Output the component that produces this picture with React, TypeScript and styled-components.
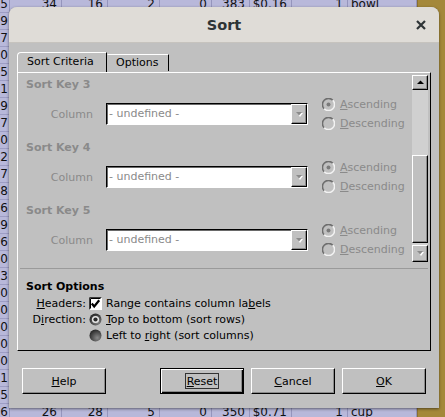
import React from 'react'
import styled, { createGlobalStyle } from 'styled-components'

const GlobalStyle = createGlobalStyle`
  html, body {
    margin: 0;
    padding: 0;
  }
  body {
    width: 445px;
    height: 417px;
    overflow: hidden;
    background: #a4883a;
    font-family: "DejaVu Sans", sans-serif;
  }
`

const Screen = styled.div`
  position: relative;
  display: flex;
  width: 445px;
  height: 417px;
  overflow: hidden;
`

const Sheet = styled.div`
  width: 417px;
  margin-top: -4px;
  background: #b8b8da;
`

const SheetRow = styled.div`
  display: grid;
  grid-template-columns: 10px 52px 46px 52px 52px 38px 42px 56px 69px;
  height: 17px;
`

const Cell = styled.div<{ $text?: boolean }>`
  box-sizing: border-box;
  display: flex;
  align-items: center;
  justify-content: ${(p) => (p.$text ? 'flex-start' : 'flex-end')};
  padding: ${(p) => (p.$text ? '0 0 0 3px' : '0 4px 0 0')};
  border-right: 1px solid #9595bd;
  border-bottom: 1px solid #9d9dc4;
  font-size: 12px;
  color: #111;
  white-space: nowrap;
  overflow: hidden;

  &:first-child {
    padding-right: 1px;
  }
`

const Desktop = styled.div`
  flex: 1;
  background: #a4883a;
  border-left: 1px solid #8a7030;
`

const Dialog = styled.div`
  position: absolute;
  left: 9px;
  top: 7px;
  width: 430px;
  height: 401px;
  display: flex;
  flex-direction: column;
  border-radius: 8px 8px 0 0;
  background: #c0c0c0;
  box-shadow: 0 1px 3px rgba(0, 0, 0, 0.5);
  overflow: hidden;
`

const TitleBar = styled.div`
  flex: none;
  height: 36px;
  box-sizing: border-box;
  display: grid;
  grid-template-columns: 1fr auto 1fr;
  align-items: center;
  background: #dfdcd7;
  border-bottom: 1px solid #c6c3be;
`

const Title = styled.div`
  grid-column: 2;
  font-size: 14.5px;
  font-weight: bold;
  color: #2e3436;
`

const CloseButton = styled.div`
  justify-self: end;
  display: flex;
  margin-right: 13px;
`

const Body = styled.div`
  flex: 1;
  display: flex;
  flex-direction: column;
  padding: 9px 8px 14px;
`

const TabStrip = styled.div`
  display: flex;
  align-items: flex-end;
  height: 20px;
`

const Tab = styled.div<{ $active?: boolean }>`
  box-sizing: border-box;
  height: ${(p) => (p.$active ? '20px' : '17px')};
  margin-bottom: ${(p) => (p.$active ? '0' : '1px')};
  padding: ${(p) => (p.$active ? '2px 0 0 9px' : '1px 0 0 8px')};
  width: ${(p) => (p.$active ? '90px' : '62px')};
  border-top: 1px solid #fff;
  border-left: 1px solid ${(p) => (p.$active ? '#fff' : '#c0c0c0')};
  border-right: 1px solid #000;
  border-radius: ${(p) => (p.$active ? '4px 0 0 0' : '0')};
  font-size: 11px;
  line-height: 14px;
  color: #000;
  position: relative;
  z-index: 1;
`

const Panel = styled.div`
  box-sizing: border-box;
  height: 279px;
  display: flex;
  flex-direction: column;
  border-style: solid;
  border-width: 1px;
  border-color: #fff #000 #000 #fff;
`

const ScrollArea = styled.div`
  display: flex;
  height: 194px;
  padding: 2px 1px 0 0;
  box-sizing: border-box;
`

const KeyList = styled.div`
  flex: 1;
  padding: 2px 0 0 8px;
  overflow: hidden;
`

const KeyBlock = styled.div`
  height: 63px;
`

const KeyTitle = styled.div`
  font-size: 11px;
  font-weight: bold;
  line-height: 16px;
  color: #8a8a8a;
`

const KeyRow = styled.div`
  display: grid;
  grid-template-columns: 67px 202px auto;
  column-gap: 13px;
  align-items: center;
  margin-top: 2px;
`

const FieldLabel = styled.div`
  text-align: right;
  font-size: 11px;
  color: #8a8a8a;
`

const Combo = styled.div`
  box-sizing: border-box;
  height: 22px;
  display: flex;
  background: #fff;
  border-style: solid;
  border-width: 1px;
  border-color: #000 #fff #fff #000;
  box-shadow: inset 1px 1px 0 #6a6a6a;
`

const ComboText = styled.div`
  flex: 1;
  padding-left: 2px;
  font-size: 11px;
  line-height: 20px;
  color: #8a8a8a;
`

const ComboButton = styled.div`
  box-sizing: border-box;
  width: 16px;
  height: 20px;
  display: flex;
  align-items: center;
  justify-content: center;
  background: #c0c0c0;
  border-style: solid;
  border-width: 1px;
  border-color: #fff #000 #000 #fff;
  box-shadow: inset -1px -1px 0 #8a8a8a;
`

const RadioGroup = styled.div`
  display: flex;
  flex-direction: column;
  margin-left: 1px;
`

const Choice = styled.div<{ $disabled?: boolean }>`
  display: flex;
  align-items: center;
  gap: 5px;
  height: 19px;
  font-size: 11px;
  color: ${(p) => (p.$disabled ? '#8a8a8a' : '#000')};
`

const Scrollbar = styled.div`
  width: 16px;
  height: 187px;
  display: flex;
  flex-direction: column;
  margin-right: 1px;
  background: #d0d0d0;
`

const ScrollButton = styled.div<{ $h: number }>`
  box-sizing: border-box;
  height: ${(p) => p.$h}px;
  display: flex;
  align-items: center;
  justify-content: center;
  background: #c0c0c0;
  border-style: solid;
  border-width: 1px;
  border-color: #fff #000 #000 #fff;
  box-shadow: inset -1px -1px 0 #8a8a8a;
`

const Trough = styled.div`
  flex: 1;
`

const Thumb = styled.div`
  box-sizing: border-box;
  height: 88px;
  margin-bottom: 2px;
  background: #c0c0c0;
  border-style: solid;
  border-width: 1px;
  border-color: #fff #000 #000 #fff;
  box-shadow: inset -1px -1px 0 #8a8a8a;
`

const Divider = styled.div`
  height: 1px;
  margin: 1px 2px 0;
  background: #9a9a9a;
`

const Options = styled.div`
  padding: 10px 0 0 8px;
`

const SectionTitle = styled.div`
  font-size: 11px;
  font-weight: bold;
  line-height: 16px;
  color: #000;
`

const OptionRow = styled.div`
  display: grid;
  grid-template-columns: 60px 13px auto;
  column-gap: 3px;
  align-items: center;
  height: 16px;
  font-size: 11px;
  color: #000;
`

const OptionLabel = styled.div`
  text-align: right;
`

const OptionText = styled.div`
  margin-left: 1px;
`

const ButtonRow = styled.div`
  display: flex;
  gap: 7px;
  margin-top: 17px;
  padding: 0 5px;
`

const Spacer = styled.div`
  flex: 1;
`

const Button = styled.div<{ $default?: boolean }>`
  box-sizing: border-box;
  width: 84px;
  height: 26px;
  display: flex;
  align-items: center;
  justify-content: center;
  font-size: 11px;
  color: #000;
  background: #c0c0c0;
  border-style: solid;
  border-width: 1px;
  border-color: ${(p) => (p.$default ? '#000' : '#fff #000 #000 #fff')};
  box-shadow: ${(p) =>
    p.$default
      ? 'inset 1px 1px 0 #fff, inset -1px -1px 0 #000, inset -2px -2px 0 #8a8a8a'
      : 'inset -1px -1px 0 #8a8a8a'};
`

const Focus = styled.span`
  padding: 1px 1px 0;
  border: 1px solid #333;
`

const U = styled.span`
  text-decoration: underline;
`

const CloseIcon = () => (
  <svg width="10" height="10" viewBox="0 0 10 10">
    <path d="M1 1 L9 9 M9 1 L1 9" stroke="#2e3436" strokeWidth="2.2" />
  </svg>
)

const Arrow = ({ up, disabled }: { up?: boolean; disabled?: boolean }) => (
  <svg width="7" height="5" viewBox="0 0 7 5">
    {disabled && <path d={up ? 'M1.5 5 L4.5 2 L7.5 5 Z' : 'M1 1 L7 1 L4 5 Z'} fill="#fff" />}
    <path
      d={up ? 'M0 4 L3.5 0.5 L7 4 Z' : 'M0 0 L6 0 L3 3.5 Z'}
      fill={disabled ? '#8a8a8a' : '#000'}
    />
  </svg>
)

const SunkenRadio = ({ checked }: { checked?: boolean }) => (
  <svg width="13" height="13" viewBox="0 0 13 13">
    <path d="M2.2 10.8 A6 6 0 0 1 10.8 2.2" fill="none" stroke="#6e6e6e" strokeWidth="1.6" />
    <path d="M10.8 2.2 A6 6 0 0 1 2.2 10.8" fill="none" stroke="#f2f2f2" strokeWidth="1.6" />
    {checked && <circle cx="6.5" cy="6.5" r="2" fill="#7a7a7a" />}
  </svg>
)

const DarkRadio = ({ checked }: { checked?: boolean }) => (
  <svg width="13" height="13" viewBox="0 0 13 13">
    <defs>
      <radialGradient id={checked ? 'rgOn' : 'rgOff'} cx="0.65" cy="0.7" r="0.7">
        <stop offset="0" stopColor="#8a8a8a" />
        <stop offset="1" stopColor="#2a2a2a" />
      </radialGradient>
    </defs>
    <circle cx="6.5" cy="6.5" r="6" fill={`url(#${checked ? 'rgOn' : 'rgOff'})`} />
    {checked && (
      <>
        <circle cx="6.5" cy="6.5" r="3.6" fill="#e6e6e6" />
        <circle cx="6.5" cy="6.5" r="2.1" fill="#2a2a2a" />
      </>
    )}
  </svg>
)

const CheckBox = () => (
  <svg width="13" height="13" viewBox="0 0 13 13">
    <rect x="0" y="0" width="13" height="13" fill="#fff" />
    <path d="M0.5 12.5 V0.5 H12.5" fill="none" stroke="#3a3a3a" />
    <path d="M1.5 11.5 V1.5 H11.5" fill="none" stroke="#000" />
    <path d="M2.8 6.5 L5.2 9.5 L10.2 3.2" fill="none" stroke="#000" strokeWidth="2.2" />
  </svg>
)

const leftColumn = [
  '5', '39', '27', '0', '5', '1', '9', '7', '10', '12', '7', '28', '66',
  '29', '16', '20', '53', '30', '0', '0', '0', '0', '1', '5', '6',
]

const firstRow = ['5', '34', '16', '2', '0', '383', '$0.16', '1', 'bowl']
const lastRow = ['6', '26', '28', '5', '0', '350', '$0.71', '1', 'cup']

const rows = leftColumn.map((v, i) => {
  if (i === 0) return firstRow
  if (i === leftColumn.length - 1) return lastRow
  return [v, '', '', '', '', '', '', '', '']
})

const sortKeys = [3, 4, 5]

const App = () => {
  return (
    <Screen>
      <GlobalStyle />
      <Sheet>
        {rows.map((row, i) => (
          <SheetRow key={i}>
            {row.map((c, j) => (
              <Cell key={j} $text={j === 8}>
                {c}
              </Cell>
            ))}
          </SheetRow>
        ))}
      </Sheet>
      <Desktop />

      <Dialog>
        <TitleBar>
          <Title>Sort</Title>
          <CloseButton>
            <CloseIcon />
          </CloseButton>
        </TitleBar>

        <Body>
          <TabStrip>
            <Tab $active>Sort Criteria</Tab>
            <Tab>Options</Tab>
          </TabStrip>

          <Panel>
            <ScrollArea>
              <KeyList>
                {sortKeys.map((n) => (
                  <KeyBlock key={n}>
                    <KeyTitle>Sort Key {n}</KeyTitle>
                    <KeyRow>
                      <FieldLabel>Column</FieldLabel>
                      <Combo>
                        <ComboText>- undefined -</ComboText>
                        <ComboButton>
                          <Arrow disabled />
                        </ComboButton>
                      </Combo>
                      <RadioGroup>
                        <Choice $disabled>
                          <SunkenRadio checked />
                          <span>
                            <U>A</U>scending
                          </span>
                        </Choice>
                        <Choice $disabled>
                          <SunkenRadio />
                          <span>
                            <U>D</U>escending
                          </span>
                        </Choice>
                      </RadioGroup>
                    </KeyRow>
                  </KeyBlock>
                ))}
              </KeyList>
              <Scrollbar>
                <ScrollButton $h={15}>
                  <Arrow up />
                </ScrollButton>
                <Trough />
                <Thumb />
                <ScrollButton $h={17}>
                  <Arrow disabled />
                </ScrollButton>
              </Scrollbar>
            </ScrollArea>

            <Divider />

            <Options>
              <SectionTitle>Sort Options</SectionTitle>
              <OptionRow>
                <OptionLabel>
                  <U>H</U>eaders:
                </OptionLabel>
                <CheckBox />
                <OptionText>
                  Range contains column la<U>b</U>els
                </OptionText>
              </OptionRow>
              <OptionRow>
                <OptionLabel>
                  D<U>i</U>rection:
                </OptionLabel>
                <DarkRadio checked />
                <OptionText>
                  <U>T</U>op to bottom (sort rows)
                </OptionText>
              </OptionRow>
              <OptionRow>
                <OptionLabel />
                <DarkRadio />
                <OptionText>
                  Left to <U>r</U>ight (sort columns)
                </OptionText>
              </OptionRow>
            </Options>
          </Panel>

          <ButtonRow>
            <Button>
              <span>
                <U>H</U>elp
              </span>
            </Button>
            <Spacer />
            <Button $default>
              <Focus>
                <U>R</U>eset
              </Focus>
            </Button>
            <Button>
              <span>
                <U>C</U>ancel
              </span>
            </Button>
            <Button>
              <span>
                <U>O</U>K
              </span>
            </Button>
          </ButtonRow>
        </Body>
      </Dialog>
    </Screen>
  )
}

export default App
